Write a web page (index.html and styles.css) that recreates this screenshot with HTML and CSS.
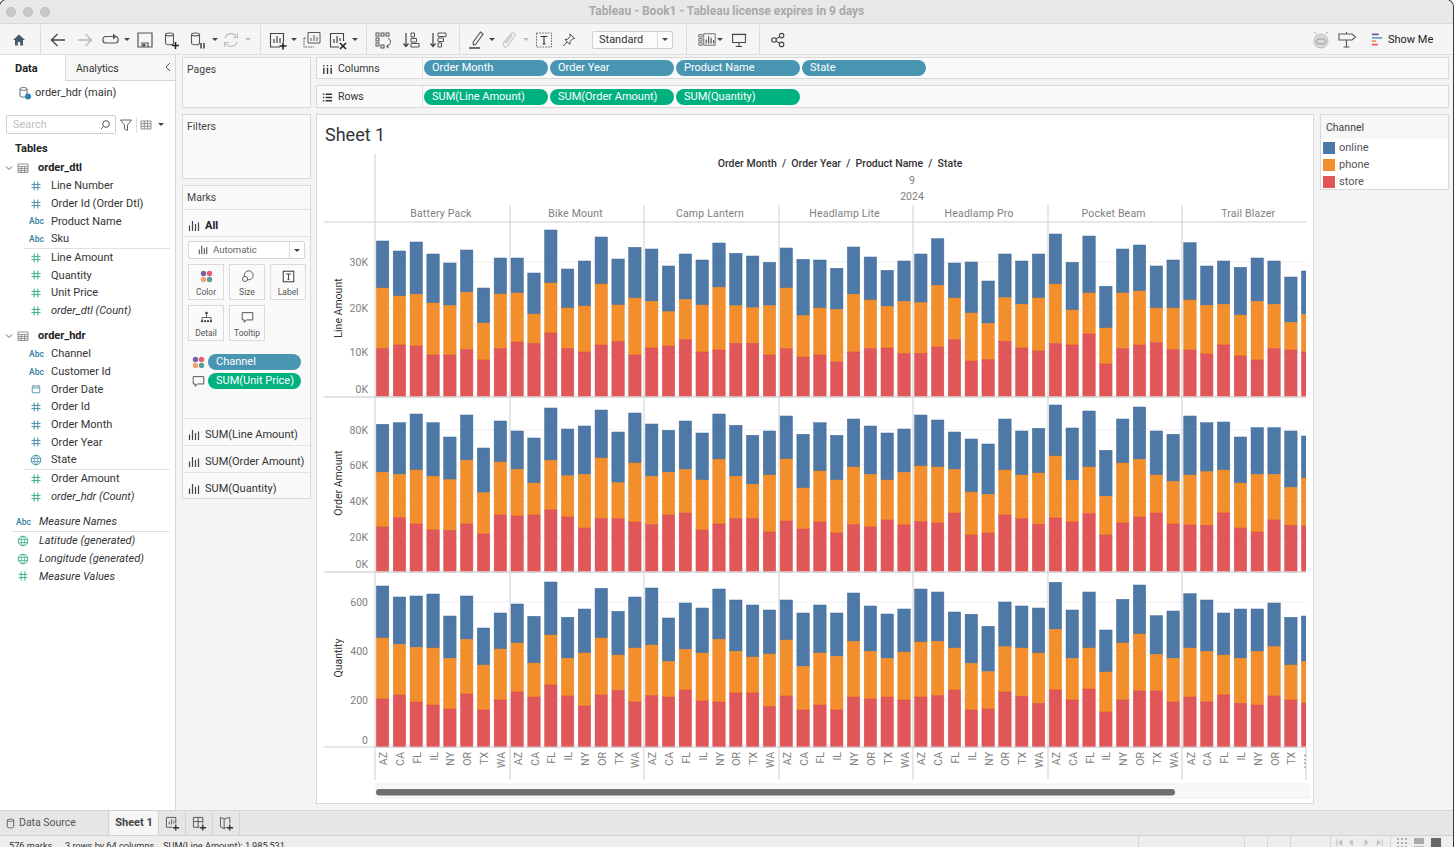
FILE: index.html
```html
<!DOCTYPE html>
<html lang="en">
<head>
<meta charset="utf-8">
<title>Tableau - Book1</title>
<link rel="stylesheet" href="styles.css">
</head>
<body>
<svg class="defs" width="0" height="0" aria-hidden="true">
  <symbol id="hash" viewBox="0 0 10 10"><path d="M3.2 0.5V9.5M6.8 0.5V9.5M0.5 3.4H9.5M0.5 6.6H9.5" fill="none" stroke="currentColor" stroke-width="1"/></symbol>
  <symbol id="globe" viewBox="0 0 12 12"><circle cx="6" cy="6" r="4.8" fill="none" stroke="currentColor"/><path d="M1.2 4.4H10.8M1.2 7.6H10.8M6 1.2C3.6 3.8 3.6 8.2 6 10.8M6 1.2C8.4 3.8 8.4 8.2 6 10.8" fill="none" stroke="currentColor" stroke-width=".8"/></symbol>
  <symbol id="cal" viewBox="0 0 12 12"><path d="M1.5 2.5H10.5V10.5H1.5ZM1.5 4.8H10.5M3.5 1V3M8.5 1V3" fill="none" stroke="currentColor"/></symbol>
  <symbol id="bars" viewBox="0 0 12 12"><path d="M1.5 5.5V11M4.5 1V11M7.5 4V11M10.5 2.5V11" fill="none" stroke="currentColor" stroke-width="1.2"/></symbol>
  <symbol id="tbl" viewBox="0 0 12 12"><path d="M1 2H11V10.5H1ZM1 4.6H11M1 6.6H11M1 8.6H11M4.3 4.6V10.5M7.6 4.6V10.5" fill="none" stroke="currentColor" stroke-width=".8"/></symbol>
  <symbol id="chev" viewBox="0 0 8 8"><path d="M1 2.5L4 5.5L7 2.5" fill="none" stroke="currentColor"/></symbol>
  <symbol id="dsbase" viewBox="0 0 20 20"><path d="M3.5 4.5C3.5 2.5 11.5 2.5 11.5 4.5V13C11.5 14 9.5 14.8 7.5 14.8C5.5 14.8 3.5 14 3.5 13ZM3.5 4.5C3.5 6.3 11.5 6.3 11.5 4.5" fill="none" stroke="currentColor" stroke-width="1.1"/></symbol>
  <symbol id="chip" viewBox="0 0 16 16"><circle cx="4.3" cy="4.3" r="3.3" fill="#7b5fa0"/><circle cx="11.7" cy="4.3" r="3.3" fill="#e4606d"/><circle cx="4.3" cy="11.7" r="3.3" fill="#f0a36b"/><circle cx="11.7" cy="11.7" r="3.3" fill="#5d9aa0"/></symbol>
  <symbol id="bubble" viewBox="0 0 16 16"><path d="M1.5 2H14.5V11H6.5L4 14V11H1.5Z" fill="none" stroke="#444" stroke-width="1.1"/></symbol>
</svg>

<div class="window">
  <header class="titlebar">
    <div class="lights"><i></i><i></i><i></i></div>
    <div class="wintitle">Tableau - Book1 - Tableau license expires in 9 days</div>
  </header>

  <nav class="toolbar">
    <svg class="ic s16" viewBox="0 0 20 20"><path d="M10 3L2.5 10H5V17H8.5V12.5H11.5V17H15V10H17.5Z" fill="#47596e"/></svg>
    <i class="tdiv"></i>
    <svg class="ic" viewBox="0 0 20 20"><path d="M17 10H4M9.5 4L3.5 10L9.5 16" fill="none" stroke="#444" stroke-width="1.3"/></svg>
    <svg class="ic" viewBox="0 0 20 20"><path d="M3 10H16M10.5 4L16.5 10L10.5 16" fill="none" stroke="#b9b9b9" stroke-width="1.3"/></svg>
    <svg class="ic" viewBox="0 0 20 20"><path d="M13 6.5H4.5C1 6.5 1 13 4.5 13H14.5C18 13 18 6.5 14.5 6.5" fill="none" stroke="#555" stroke-width="1.2"/><path d="M12 3.5L15.5 6.5L12 9.5Z" fill="#555"/></svg>
    <span class="caret"></span>
    <svg class="ic" viewBox="0 0 20 20"><path d="M3 3H17V17H3ZM7 17V13H13V17" fill="none" stroke="#555" stroke-width="1.2"/><path d="M8 14H10.5V16.5H8Z" fill="#555"/></svg>
    <svg class="ic" viewBox="0 0 20 20"><use href="#dsbase" color="#555"/><path d="M13.5 12V19M10 15.5H17" stroke="#222" stroke-width="1.6"/></svg>
    <svg class="ic" viewBox="0 0 20 20"><use href="#dsbase" color="#555"/><path d="M13 13V18.5M16 13V18.5" stroke="#333" stroke-width="1.4"/></svg>
    <span class="caret"></span>
    <svg class="ic" viewBox="0 0 20 20"><path d="M4 8A6.5 6.5 0 0 1 15.5 6.5M16 12A6.5 6.5 0 0 1 4.5 13.5" fill="none" stroke="#bdbdbd" stroke-width="1.3"/><path d="M16.5 3V7.5H12M3.5 17V12.5H8" fill="none" stroke="#bdbdbd" stroke-width="1.1"/></svg>
    <span class="caret off"></span>
    <i class="tdiv"></i>
    <svg class="ic" viewBox="0 0 20 20"><path d="M12 17H2.5V3.5H15.5V12" fill="none" stroke="#444" stroke-width="1.1"/><path d="M6 13V9M9 13V6M12 13V8" stroke="#444" stroke-width="1.2"/><path d="M15 12.5V19.5M11.5 16H18.5" stroke="#222" stroke-width="1.6"/></svg>
    <span class="caret"></span>
    <svg class="ic" viewBox="0 0 20 20"><path d="M6 2.5H18V13H6Z" fill="none" stroke="#555"/><path d="M9 11V8M12 11V5M15 11V7" stroke="#555"/><path d="M2 8H4.5M2 8V17H12" fill="none" stroke="#555" stroke-dasharray="1.6 1"/></svg>
    <svg class="ic" viewBox="0 0 20 20"><path d="M11 17H2.5V3.5H15.5V11" fill="none" stroke="#444" stroke-width="1.1"/><path d="M6 13V9M9 13V6M12 11V8" stroke="#444" stroke-width="1.2"/><path d="M12 13L18 19M18 13L12 19" stroke="#222" stroke-width="1.6"/></svg>
    <span class="caret"></span>
    <i class="tdiv"></i>
    <svg class="ic" viewBox="0 0 20 20"><g fill="none" stroke="#555"><rect x="2" y="3" width="3" height="3"/><rect x="7" y="3" width="3" height="3"/><rect x="12" y="3" width="3" height="3"/><rect x="2" y="8" width="3" height="3"/><rect x="2" y="13" width="3" height="3"/><rect x="7" y="15" width="3" height="3"/><path d="M14 8C18 10 17 15 13 16.5M15 18L12.5 16.5L14.5 14.5"/></g></svg>
    <svg class="ic" viewBox="0 0 20 20"><path d="M5 3V16M2.5 13.5L5 16.5L7.5 13.5" fill="none" stroke="#444" stroke-width="1.2"/><path d="M10 3H13.5V7H10ZM10 8.5H15.5V12H10ZM10 13.5H18V17H10Z" fill="none" stroke="#555"/></svg>
    <svg class="ic" viewBox="0 0 20 20"><path d="M5 3V16M2.5 13.5L5 16.5L7.5 13.5" fill="none" stroke="#444" stroke-width="1.2"/><path d="M10 3H18V6.5H10ZM10 8H15.5V11.5H10ZM10 13H13.5V17H10Z" fill="none" stroke="#555"/></svg>
    <i class="tdiv"></i>
    <svg class="ic" viewBox="0 0 20 20"><path d="M13.5 2L16 4L9 14L6.5 15L6 12.5Z" fill="none" stroke="#555" stroke-width="1.1"/><path d="M2 18H13" stroke="#333" stroke-width="1.4"/></svg>
    <span class="caret"></span>
    <svg class="ic" viewBox="0 0 20 20"><path d="M6 13L12 4C14 1.5 17.5 4 15.5 6.5L8.5 16C6.5 18.5 3 16 4.5 13L10.5 5.5C11.5 4.5 13 5.5 12.5 6.5L7.5 13.5" fill="none" stroke="#c4c4c4" stroke-width="1.1"/></svg>
    <span class="caret off"></span>
    <svg class="ic" viewBox="0 0 20 20"><rect x="2.5" y="3" width="15" height="14" fill="none" stroke="#666" stroke-dasharray="1.6 1.2"/><path d="M6.5 6.5H13.5M10 6.5V14M8.5 14H11.5" fill="none" stroke="#333" stroke-width="1.1"/></svg>
    <svg class="ic s16" viewBox="0 0 20 20"><path d="M11 2.5L17 8L14.5 8.5L11.5 12L11 15.5L5 9.5L8.5 9L11.5 5.5ZM7.5 12.5L3 17.5" fill="none" stroke="#444" stroke-width="1.2"/></svg>
    <div class="select"><span class="lbl">Standard</span><b><span class="caret"></span></b></div>
    <i class="tdiv"></i>
    <svg class="ic wide" viewBox="0 0 22 18"><path d="M1 3H5V6H1ZM1 8H5V11H1ZM1 13H5V16H1Z" fill="none" stroke="#555"/><path d="M7 2H21V16H7Z" fill="none" stroke="#555"/><path d="M10 14V9M13 14V5M16 14V7M19 14V10" stroke="#444" stroke-width="1.3"/></svg>
    <span class="caret"></span>
    <svg class="ic s16" viewBox="0 0 20 20"><path d="M2 3H18V13H2ZM10 13V18M6 18H14" fill="none" stroke="#444" stroke-width="1.3"/><path d="M1 3H19" stroke="#444" stroke-width="1.6"/></svg>
    <i class="tdiv"></i>
    <svg class="ic s16" viewBox="0 0 20 20"><g fill="none" stroke="#444" stroke-width="1.4"><circle cx="5" cy="10" r="2.8"/><circle cx="14.5" cy="4.5" r="2.8"/><circle cx="14.5" cy="15.5" r="2.8"/><path d="M7.3 8.7L12.2 5.8M7.3 11.3L12.2 14.2"/></g></svg>
    <span></span>
    <svg class="ic" viewBox="0 0 20 20"><circle cx="10" cy="11" r="7" fill="#d8d8d8" stroke="#bdbdbd"/><rect x="5.5" y="9" width="9" height="5" rx="2.5" fill="none" stroke="#999"/><path d="M5 4L3 1.5M15 4L17 1.5" stroke="#aaa"/></svg>
    <svg class="ic" viewBox="0 0 20 20"><path d="M2 4H15L18.5 7L15 10H2ZM9.5 10V17M6.5 17H12.5M9.5 2V4" fill="none" stroke="#555" stroke-width="1.1"/></svg>
    <div class="showme">
      <svg class="sm" viewBox="0 0 14 15"><path d="M1 1.5H9" stroke="#6d5a9c" stroke-width="2"/><path d="M1 5.5H13" stroke="#6ba3cf" stroke-width="2"/><path d="M1 9.5H6" stroke="#ee9a55" stroke-width="2"/><path d="M1 13.5H8" stroke="#e8596a" stroke-width="2"/></svg>
      <span>Show Me</span>
    </div>
  </nav>

  <main class="main">
    <aside class="datapane">
      <div class="tabs">
        <div class="tab active">Data</div>
        <div class="tab"><span>Analytics</span><svg class="collapse" viewBox="0 0 8 12"><path d="M6 2L2 6L6 10" fill="none" stroke="#555"/></svg></div>
      </div>
      <div class="source">
        <svg class="srcicon" viewBox="0 0 14 14"><path d="M2 3C2 1 9 1 9 3V10C9 11.5 2 11.5 2 10ZM2 3C2 4.8 9 4.8 9 3" fill="none" stroke="#666"/><circle cx="10" cy="10.5" r="3" fill="#2c7fb8"/></svg>
        <span>order_hdr (main)</span>
      </div>
      <div class="searchrow">
        <div class="search"><span>Search</span><svg viewBox="0 0 12 12"><circle cx="7" cy="5" r="3.3" fill="none" stroke="#555"/><path d="M4.6 7.4L2 10" stroke="#555"/></svg></div>
        <svg class="filt" viewBox="0 0 14 14"><path d="M1.5 2H12.5L8.5 7V12.5L5.5 11V7Z" fill="none" stroke="#666"/></svg>
        <i class="vsep"></i>
        <svg class="gridic" viewBox="0 0 12 10"><path d="M1 1H11V9H1ZM1 3.6H11M1 6.3H11M4.3 1V9M7.6 1V9" fill="none" stroke="#777" stroke-width=".8"/></svg>
        <span class="caret"></span>
      </div>
      <div class="tree">
        <div class="tablesh">Tables</div>
        <div class="thead"><svg class="tchev"><use href="#chev"/></svg><svg class="ttbl"><use href="#tbl"/></svg><b>order_dtl</b></div>
        <div class="f"><svg class="h d"><use href="#hash"/></svg>Line Number</div>
        <div class="f"><svg class="h d"><use href="#hash"/></svg>Order Id (Order Dtl)</div>
        <div class="f"><em class="abc">Abc</em>Product Name</div>
        <div class="f"><em class="abc">Abc</em>Sku</div>
        <div class="sep"></div>
        <div class="f"><svg class="h m"><use href="#hash"/></svg>Line Amount</div>
        <div class="f"><svg class="h m"><use href="#hash"/></svg>Quantity</div>
        <div class="f"><svg class="h m"><use href="#hash"/></svg>Unit Price</div>
        <div class="f it"><svg class="h m"><use href="#hash"/></svg>order_dtl (Count)</div>
        <div class="thead second"><svg class="tchev"><use href="#chev"/></svg><svg class="ttbl"><use href="#tbl"/></svg><b>order_hdr</b></div>
        <div class="f"><em class="abc">Abc</em>Channel</div>
        <div class="f"><em class="abc">Abc</em>Customer Id</div>
        <div class="f"><svg class="h d"><use href="#cal"/></svg>Order Date</div>
        <div class="f"><svg class="h d"><use href="#hash"/></svg>Order Id</div>
        <div class="f"><svg class="h d"><use href="#hash"/></svg>Order Month</div>
        <div class="f"><svg class="h d"><use href="#hash"/></svg>Order Year</div>
        <div class="f"><svg class="h d g"><use href="#globe"/></svg>State</div>
        <div class="sep"></div>
        <div class="f"><svg class="h m"><use href="#hash"/></svg>Order Amount</div>
        <div class="f it"><svg class="h m"><use href="#hash"/></svg>order_hdr (Count)</div>
        <div class="f it top names"><em class="abc">Abc</em>Measure Names</div>
        <div class="sep top"></div>
        <div class="f it top"><svg class="h m g"><use href="#globe"/></svg>Latitude (generated)</div>
        <div class="f it top"><svg class="h m g"><use href="#globe"/></svg>Longitude (generated)</div>
        <div class="f it top"><svg class="h m"><use href="#hash"/></svg>Measure Values</div>
      </div>
    </aside>

    <section class="cards">
      <div class="card pages"><div class="cardh">Pages</div></div>
      <div class="card filters"><div class="cardh">Filters</div></div>
      <div class="card marks">
        <div class="marksh">Marks</div>
        <div class="mrow all"><svg class="mb"><use href="#bars"/></svg><b>All</b></div>
        <div class="auto"><svg class="mb"><use href="#bars"/></svg><span class="lbl">Automatic</span><b><span class="caret"></span></b></div>
        <div class="mbtns">
          <div class="mbtn"><svg viewBox="0 0 16 16"><use href="#chip"/></svg><span>Color</span></div>
          <div class="mbtn"><svg viewBox="0 0 16 16"><circle cx="9.5" cy="6.5" r="5.5" fill="none" stroke="#444"/><circle cx="5" cy="11" r="3.2" fill="#f8f8f8" stroke="#444"/></svg><span>Size</span></div>
          <div class="mbtn"><svg viewBox="0 0 16 16"><rect x="1.5" y="1.5" width="13" height="13" fill="none" stroke="#333" stroke-width="1.2"/><path d="M5 5H11M8 5V11.5M6.7 11.5H9.3" fill="none" stroke="#333" stroke-width="1.1"/></svg><span>Label</span></div>
          <div class="mbtn"><svg viewBox="0 0 16 16"><g fill="#444"><circle cx="8" cy="2.5" r="1.6"/><circle cx="2.5" cy="12.5" r="1.4"/><circle cx="6.2" cy="12.5" r="1.4"/><circle cx="9.8" cy="12.5" r="1.4"/><circle cx="13.5" cy="12.5" r="1.4"/></g><path d="M8 3V8M2.5 12V8H13.5V12" fill="none" stroke="#444"/></svg><span>Detail</span></div>
          <div class="mbtn"><svg viewBox="0 0 16 16"><use href="#bubble"/></svg><span>Tooltip</span></div>
        </div>
        <div class="mpills">
          <div class="mpill"><svg viewBox="0 0 16 16"><use href="#chip"/></svg><span class="pill dim">Channel</span></div>
          <div class="mpill"><svg viewBox="0 0 16 16"><use href="#bubble"/></svg><span class="pill mea">SUM(Unit Price)</span></div>
        </div>
        <div class="mrow mm"><svg class="mb"><use href="#bars"/></svg>SUM(Line Amount)</div>
        <div class="mrow mm"><svg class="mb"><use href="#bars"/></svg>SUM(Order Amount)</div>
        <div class="mrow mm"><svg class="mb"><use href="#bars"/></svg>SUM(Quantity)</div>
      </div>
    </section>

    <section class="work">
      <div class="shelf cols">
        <div class="shelfl"><svg viewBox="0 0 12 12"><path d="M2 1V2.5M6 1V2.5M10 1V2.5M2 4V11M6 4V11M10 4V11" stroke="#333" stroke-width="1.5"/></svg><span>Columns</span></div>
        <div class="pills"><span class="pill dim">Order Month</span><span class="pill dim">Order Year</span><span class="pill dim">Product Name</span><span class="pill dim">State</span></div>
      </div>
      <div class="shelf rows">
        <div class="shelfl"><svg viewBox="0 0 12 12"><path d="M1 2.5H2.5M4 2.5H11M1 6H2.5M4 6H11M1 9.5H2.5M4 9.5H11" stroke="#333" stroke-width="1.5"/></svg><span>Rows</span></div>
        <div class="pills"><span class="pill mea">SUM(Line Amount)</span><span class="pill mea">SUM(Order Amount)</span><span class="pill mea">SUM(Quantity)</span></div>
      </div>
      <div class="vizrow">
        <div class="sheet">
          <h1>Sheet 1</h1>
          <svg id="chart" class="chart" viewBox="317 151 996 652"></svg>
        </div>
        <div class="legend">
          <div class="legh">Channel</div>
          <div class="li"><i class="sw online"></i>online</div>
          <div class="li"><i class="sw phone"></i>phone</div>
          <div class="li"><i class="sw store"></i>store</div>
        </div>
      </div>
    </section>
  </main>

  <footer class="sheets">
    <div class="stab ds"><svg viewBox="0 0 12 12"><path d="M2.5 2.5C2.5 .8 9.5 .8 9.5 2.5V9.5C9.5 11.2 2.5 11.2 2.5 9.5ZM2.5 2.5C2.5 4 9.5 4 9.5 2.5" fill="none" stroke="#555"/></svg><span>Data Source</span></div>
    <div class="stab cur">Sheet 1</div>
    <div class="stab add"><svg viewBox="0 0 16 16"><path d="M8 12H1.5V1.5H11.5V8" fill="none" stroke="#555"/><path d="M4.5 9V6M7 9V3.5M9.5 8V5" stroke="#555"/><path d="M11.5 9V15.5M8.5 12.5H15" stroke="#333" stroke-width="1.4"/></svg></div>
    <div class="stab add"><svg viewBox="0 0 16 16"><path d="M8 12H1.5V1.5H11.5V8M1.5 6H11.5M6.5 1.5V12" fill="none" stroke="#555"/><path d="M11.5 9V15.5M8.5 12.5H15" stroke="#333" stroke-width="1.4"/></svg></div>
    <div class="stab add"><svg viewBox="0 0 16 16"><path d="M8 12L5.5 13.5L1.5 11.5V1.5L5.5 3L11.5 1.5V8M5.5 3V13.5" fill="none" stroke="#555"/><path d="M11.5 9V15.5M8.5 12.5H15" stroke="#333" stroke-width="1.4"/></svg></div>
  </footer>
  <footer class="status">
    <span class="st1">576 marks</span><span class="st2">3 rows by 64 columns</span><span class="st3">SUM(Line Amount): 1,985,531</span>
    <div class="stright">
      <i class="ssep s1"></i><i class="ssep s2"></i><i class="ssep s3"></i><i class="ssep s4"></i><i class="ssep s5"></i><i class="ssep s6"></i>
      <svg class="navs" viewBox="0 0 54 10"><path d="M1 1V9" stroke="#bbb"/><path d="M7 1L2.5 5L7 9ZM19 1L14.5 5L19 9ZM32 1L36.5 5L32 9ZM46 1L50.5 5L46 9Z" fill="#c2c2c2"/><path d="M52 1V9" stroke="#bbb"/></svg>
      <div class="views">
        <svg viewBox="0 0 12 10"><path d="M1 1H3M5 1H7M9 1H11M1 5H3M5 5H7M9 5H11M1 9H3M5 9H7M9 9H11" stroke="#999" stroke-width="1.6"/></svg>
        <svg viewBox="0 0 12 10"><rect x="1" y="0" width="10" height="6" fill="#aaa"/><path d="M1 9H11" stroke="#bbb" stroke-width="2"/></svg>
        <svg viewBox="0 0 12 10"><rect x="1" y="0" width="10" height="10" fill="#666"/></svg>
      </div>
    </div>
  </footer>
</div>
<script src="chart.js"></script>
</body>
</html>
```
FILE: styles.css
```css
* { box-sizing: border-box; }
html, body { margin: 0; height: 100%; overflow: hidden; background: #fff; }
body { font: 11px/1.2 Roboto, "Liberation Sans", sans-serif; color: #333; }
.defs { position: absolute; }

.window { width: 1453px; height: 847px; display: flex; flex-direction: column; background: #f4f4f4; border-radius: 7px 7px 0 0; overflow: hidden; box-shadow: 0 0 0 1px #3a3a3a; }

.titlebar { height: 24px; flex: none; background: #e8e8e8; border-bottom: 1px solid #d9d9d9; display: flex; align-items: center; position: relative; }
.lights { display: flex; gap: 7px; padding-left: 6px; }
.lights i { width: 10px; height: 10px; border-radius: 50%; background: #c8c8c8; border: 1px solid #bcbcbc; }
.wintitle { position: absolute; left: 0; right: 0; text-align: center; font-weight: 700; font-size: 12px; color: #a9a9a9; }

.toolbar { height: 31px; flex: none; display: grid; align-items: center; justify-items: center; padding: 1px 18px 0 6px; background: #f5f5f5; border-bottom: 1px solid #dedede;
  grid-template-columns: 26px 17px 18px 36px 16px 16px 20px 34px 18px 16px 16px 18px 6px 30px 2px 34px 18px 16px 6px 30px 24px 30px 12px 24px 6px 28px 6px 30px 20px 94px 26px 16px 10px 28px 12px 26px 1fr 20px 32px 72px; }
.ic { width: 20px; height: 20px; display: block; }
.ic.s16 { width: 16px; height: 16px; }
.ic.wide { width: 18px; height: 15px; }
.tdiv { width: 1px; height: 29px; background: #dcdcdc; }
.caret { display: inline-block; width: 0; height: 0; border-left: 3px solid transparent; border-right: 3px solid transparent; border-top: 3.5px solid #444; }
.caret.off { border-top-color: #bdbdbd; }
.select { justify-self: end; width: 81px; height: 18px; display: flex; align-items: center; background: #fbfbfb; border: 1px solid #cfcfcf; border-radius: 2px; font-size: 11px; color: #333; }
.select .lbl { flex: 1; padding-left: 6px; }
.select b { width: 15px; height: 100%; border-left: 1px solid #d9d9d9; display: flex; align-items: center; justify-content: center; }
.showme { width: 72px; display: flex; align-items: center; gap: 5px; padding-left: 8px; color: #222; white-space: nowrap; }
.sm { width: 12px; height: 13px; }

.main { height: 755px; flex: none; display: flex; align-items: flex-start; background: #f4f4f4; }

.datapane { width: 176px; height: 755px; flex: none; background: #fff; border-right: 1px solid #d6d6d6; }
.tabs { display: flex; height: 26px; }
.tab { display: flex; align-items: center; padding: 2px 0 0 15px; }
.tab.active { width: 65px; font-weight: 700; color: #222; }
.tab:not(.active) { flex: 1; position: relative; padding: 3px 0 0 10px; background: #f6f6f6; border-left: 1px solid #d6d6d6; border-bottom: 1px solid #d6d6d6; font-size: 10.5px; }
.collapse { position: absolute; right: 3px; top: 6px; width: 8px; height: 12px; }
.source { height: 23px; display: flex; align-items: center; gap: 3px; padding: 1px 0 0 18px; }
.srcicon { width: 14px; height: 14px; }
.searchrow { height: 21px; margin-top: 10px; padding-left: 6px; display: flex; align-items: center; }
.search { width: 110px; height: 19px; border: 1px solid #cfcfcf; border-radius: 2px; display: flex; align-items: center; justify-content: space-between; padding: 0 4px 0 6px; color: #c0c0c0; }
.search svg { width: 12px; height: 12px; }
.filt { width: 14px; height: 14px; margin-left: 3px; }
.vsep { width: 1px; height: 16px; background: #ddd; margin: 0 3px; }
.gridic { width: 12px; height: 10px; margin-right: 5px; }
.searchrow .caret { margin-left: 1px; }

.tree { padding-top: 5px; }
.tablesh { height: 19px; line-height: 18px; padding-left: 15px; font-weight: 700; color: #222; }
.thead { height: 18px; display: flex; align-items: center; }
.thead.second { margin-top: 7.5px; }
.thead b { font-weight: 700; color: #222; }
.tchev { width: 8px; height: 8px; margin-left: 5px; color: #666; }
.ttbl { width: 12px; height: 12px; margin: 0 9px 0 4px; color: #777; }
.f { height: 17.7px; display: flex; align-items: center; padding-left: 51px; position: relative; color: #333; white-space: nowrap; }
.f.it { font-style: italic; }
.f.top { padding-left: 39px; }
.f.names { margin-top: 8px; }
.f .h { position: absolute; left: 31px; top: 4px; width: 10px; height: 10px; }
.f.top .h { left: 18px; }
.h.d { color: #4a8fa8; }
.h.m { color: #3fae8e; }
.h.g { width: 12px; height: 12px; top: 3px; left: 30px; }
.f.top .h.g { left: 17px; }
.abc { position: absolute; left: 29px; top: 4px; font-style: normal; font-weight: 500; font-size: 8.5px; color: #2f7d9f; }
.f.top .abc { left: 16px; }
.sep { height: 1px; margin: 0 5px 0 24px; background: #e0e0e0; }
.sep.top { margin-left: 12px; }

.cards { width: 129px; flex: none; margin-left: 6px; padding-top: 2px; display: flex; flex-direction: column; gap: 6px; }
.card { background: #fafafa; border: 1px solid #d9d9d9; }
.pages { height: 51px; }
.filters { height: 65px; }
.cardh { padding: 6px 4px; color: #444; font-size: 10.5px; }
.marks { height: 314px; display: flex; flex-direction: column; background: #f9f9f9; }
.marksh { height: 24px; padding-left: 4px; line-height: 23px; font-size: 10.5px; color: #444; border-bottom: 1px solid #e3e3e3; }
.mrow { height: 27px; flex: none; display: flex; align-items: center; gap: 5px; padding-left: 5px; border-bottom: 1px solid #e3e3e3; }
.mrow b { color: #222; }
.mb { width: 12px; height: 12px; color: #444; }
.all { background: #fafafa; padding-top: 5px; }
.auto { margin: 4px 5px 0; height: 18px; flex: none; display: flex; align-items: center; gap: 5px; padding-left: 9px; background: #fff; border: 1px solid #d6d6d6; border-radius: 2px; font-size: 9.5px; color: #666; }
.auto .mb { width: 10px; height: 10px; }
.auto .lbl { flex: 1; }
.auto b { width: 15px; height: 100%; border-left: 1px solid #ddd; display: flex; align-items: center; justify-content: center; }
.mbtns { margin: 5px 5px 0; display: grid; grid-template-columns: repeat(3, 36px); column-gap: 5px; row-gap: 5px; }
.mbtn { height: 36px; display: flex; flex-direction: column; align-items: center; justify-content: flex-end; gap: 2px; padding-bottom: 2px; background: #fafafa; border: 1px solid #dadada; font-size: 8.5px; color: #555; }
.mbtn svg { width: 13px; height: 13px; margin-bottom: 2px; }
.mpills { margin: 13px 9px 0 9px; display: flex; flex-direction: column; gap: 3px; height: 64px; flex: none; }
.mpill { display: flex; align-items: center; gap: 3px; }
.mpill svg { width: 13px; height: 13px; }
.mpill .pill { width: 93px; }
.mm { border-bottom: 0; border-top: 1px solid #e3e3e3; color: #333; padding-top: 6px; }

.work { width: 1133px; flex: none; margin-left: 5px; padding-top: 2px; }
.shelf { display: flex; background: #fafafa; border: 1px solid #d9d9d9; height: 22px; }
.shelf.rows { margin-top: 6px; height: 23px; }
.shelfl { width: 106px; display: flex; align-items: center; gap: 5px; padding: 2px 0 0 5px; border-right: 1px solid #e3e3e3; color: #333; font-size: 10.5px; }
.shelfl svg { width: 11px; height: 11px; }
.pills { display: flex; align-items: center; gap: 2px; padding-left: 1px; }
.pill { display: block; width: 124px; height: 16px; line-height: 16px; padding-left: 8px; border-radius: 8px; color: #fff; white-space: nowrap; }
.pill.dim { background: #4996b2; }
.pill.mea { background: #00b180; }

.vizrow { display: flex; gap: 6px; margin-top: 6px; align-items: flex-start; }
.sheet { width: 998px; height: 690px; flex: none; background: #fff; border: 1px solid #d9d9d9; }
.sheet h1 { margin: 0; height: 36px; line-height: 40px; padding-left: 8px; font-weight: 400; font-size: 18px; color: #333; }
.chart { display: block; width: 996px; height: 652px; }
.legend { width: 129px; height: 76px; background: #fff; border: 1px solid #d9d9d9; }
.legh { height: 24px; line-height: 25px; padding-left: 5px; background: #f6f6f6; color: #444; font-size: 10.5px; }
.li { height: 17px; display: flex; align-items: center; gap: 4px; padding-left: 2px; color: #555; }
.sw { width: 12px; height: 12px; }
.online { background: #4e79a7; }
.phone { background: #f28e2b; }
.store { background: #e15759; }

.chart text { font-family: Roboto, "Liberation Sans", sans-serif; font-size: 10.5px; fill: #808080; }
.chart .hdr { fill: #333; font-weight: 500; }
.chart .ttl { fill: #333; }
.chart .pname { letter-spacing: .2px; }
.chart .grid { stroke: #efefef; stroke-width: 1; }
.chart .rule { stroke: #cfcfcf; stroke-width: 1; }
.chart .rowrule { stroke: #d9d9d9; stroke-width: 1.5; }
.chart .b0 { fill: #4e79a7; stroke: #3f6a9b; stroke-width: .5; }
.chart .b1 { fill: #f28e2b; stroke: #ea8a2a; stroke-width: .5; }
.chart .b2 { fill: #e15759; stroke: #d84e52; stroke-width: .5; }
.chart .track { fill: #f8f8f8; }
.chart .thumb { fill: #6f6f6f; }

.sheets { height: 26px; flex: none; display: flex; background: #e6e6e6; border-top: 1px solid #d3d3d3; border-bottom: 1px solid #d3d3d3; }
.stab { display: flex; align-items: center; justify-content: center; border-right: 1px solid #d3d3d3; color: #555; }
.stab.ds { width: 109px; gap: 3px; justify-content: flex-start; padding-left: 5px; font-size: 10.5px; }
.stab.ds svg { width: 11px; height: 11px; }
.stab.cur { width: 50px; background: #f6f6f6; font-weight: 700; color: #444; border-left: 1px solid #eee; }
.stab.add { width: 27px; }
.stab.add svg { width: 15px; height: 15px; }

.status { flex: 1; position: relative; background: #eeeeee; font-size: 9.2px; color: #333; white-space: nowrap; }
.status > span { position: absolute; top: 4px; }
.st1 { left: 9px; } .st2 { left: 65px; } .st3 { left: 163px; }
.stright { position: absolute; inset: 0; }
.ssep { position: absolute; top: 0; bottom: 0; width: 1px; background: #d6d6d6; }
.s1 { left: 1138px; } .s2 { left: 1244px; } .s3 { left: 1267px; } .s4 { left: 1290px; } .s5 { left: 1330px; } .s6 { left: 1390px; }
.navs { position: absolute; left: 1336px; top: 2px; width: 48px; height: 9px; }
.views { position: absolute; left: 1396px; top: 2px; display: flex; gap: 5px; }
.views svg { width: 12px; height: 10px; }
```
FILE: chart.js
```js
// Stacked bars: for each bar, y of [blue top, orange top, red top] read per panel (8 states, 7 products).
var NS = 'http://www.w3.org/2000/svg';
var svg = document.getElementById('chart');
var rowsData = [
  { y0: 225, base: 397, title: 'Line Amount', tY: 308, ticks: [['30K',262],['20K',307.5],['10K',352.3],['0K',397,389]], d:
  [48,189,371,78,213,360,51,208,363,87,234,390,114,242,390,75,202,374,189,294,405,99,207,371,
   99,204,351,144,267,355,15,174,324,132,249,371,108,243,381,36,177,360,102,240,349,67,219,390,
   72,229,369,123,260,363,87,223,344,105,240,381,54,187,375,85,242,355,93,248,355,112,242,390,
   69,189,371,103,272,396,105,249,390,130,253,411,66,208,381,96,225,371,136,244,369,108,229,386,
   87,233,385,41,181,366,114,219,344,111,264,408,168,295,404,87,218,349,108,238,369,87,219,378,
   27,177,356,112,255,360,33,204,327,184,309,417,72,204,371,60,198,360,123,249,353,105,249,374,
   53,225,375,123,241,387,108,238,360,127,270,393,99,229,405,108,238,371,156,292,375,138,268,381] },
  { y0: 397, base: 572, title: 'Order Amount', tY: 483, ticks: [['80K',429.7],['60K',465],['40K',501],['20K',537],['0K',572,564]], d:
  [82,226,390,77,232,362,51,219,381,77,238,399,120,248,400,54,190,381,153,287,411,72,195,354,
   102,217,357,123,258,354,33,190,339,96,236,360,87,232,393,39,183,365,105,257,365,48,198,375,
   81,238,383,100,226,354,72,217,348,108,249,399,51,187,381,85,238,365,115,262,365,102,234,405,
   57,186,372,112,273,396,77,222,375,115,249,408,66,210,383,87,232,390,108,249,369,96,226,384,
   54,207,374,69,210,378,105,217,348,126,285,414,141,292,408,66,219,354,102,234,365,94,228,382,
   24,177,363,93,250,375,42,210,350,160,298,414,66,198,378,30,187,360,102,234,348,112,253,381,
   57,234,384,77,224,385,75,219,348,120,258,393,92,232,405,92,232,369,102,271,385,117,243,387] },
  { y0: 575, base: 747, title: 'Quantity', tY: 658, ticks: [['600',602],['400',651],['200',700],['0',747,740]], d:
  [33,189,372,66,208,360,63,217,381,57,219,390,123,250,402,63,193,357,159,270,405,114,222,375,
   87,204,351,124,264,366,21,180,330,127,250,363,102,234,393,40,189,360,109,240,346,66,219,381,
   39,210,362,129,259,366,84,223,345,99,234,378,42,193,381,75,229,354,90,246,354,105,237,394,
   75,195,363,114,274,405,90,234,390,114,244,405,54,199,366,93,229,372,117,250,366,102,231,375,
   42,201,366,51,199,362,111,219,345,118,265,405,154,290,402,81,215,351,93,219,364,99,234,385,
   22,163,345,105,250,375,51,219,342,165,291,411,73,204,375,30,177,348,122,238,348,108,250,381,
   56,219,366,75,229,381,114,240,360,102,250,385,102,229,390,84,215,363,127,270,375,123,259,384] }
];
var products = ['Battery Pack','Bike Mount','Camp Lantern','Headlamp Lite','Headlamp Pro','Pocket Beam','Trail Blazer'];
var states = ['AZ','CA','FL','IL','NY','OR','TX','WA'];
var X0 = 376.4, PITCH = 16.82, W = 12.4, PANEL = 134.55, PX = 375, RIGHT = 1306;

function el(name, attrs, text, parent) {
  var e = document.createElementNS(NS, name);
  for (var k in attrs) e.setAttribute(k, attrs[k]);
  if (text != null) e.textContent = text;
  (parent || svg).appendChild(e);
  return e;
}

var clip = el('clipPath', { id: 'paneclip' }, null, el('defs', {}));
el('rect', { x: 317, y: 151, width: RIGHT - 317, height: 652 }, null, clip);
var gridLayer = el('g', {});
var g = el('g', { 'clip-path': 'url(#paneclip)' });

// headers
el('text', { x: 840, y: 167, 'text-anchor': 'middle', class: 'hdr' }, 'Order Month\u00a0 /\u00a0 Order Year\u00a0 /\u00a0 Product Name\u00a0 /\u00a0 State');
el('text', { x: 912, y: 184, 'text-anchor': 'middle' }, '9');
el('text', { x: 912, y: 200, 'text-anchor': 'middle' }, '2024');
products.forEach(function (p, i) {
  el('text', { x: PX + PANEL * (i + 0.49), y: 217, 'text-anchor': 'middle', class: 'pname' }, p);
});

rowsData.forEach(function (r) {
  r.ticks.forEach(function (t) {
    el('line', { x1: PX, x2: RIGHT, y1: t[1], y2: t[1], class: 'grid' }, null, gridLayer);
    el('text', { x: 368, y: (t[2] || t[1]) + 4, 'text-anchor': 'end' }, t[0]);
  });
  el('text', { transform: 'translate(342 ' + r.tY + ') rotate(-90)', 'text-anchor': 'middle', class: 'ttl' }, r.title);
  for (var i = 0; i < 56; i++) {
    var x = X0 + PITCH * i;
    var tops = [r.d[i * 3], r.d[i * 3 + 1], r.d[i * 3 + 2]].map(function (v) { return r.y0 + v / 3; });
    var ends = [tops[1], tops[2], r.base];
    for (var c = 0; c < 3; c++) {
      el('rect', { x: x.toFixed(2), y: tops[c].toFixed(1), width: W, height: (ends[c] - tops[c]).toFixed(1), class: 'b' + c }, null, g);
    }
  }
});

// x axis labels
for (var i = 0; i < 56; i++) {
  var cx = X0 + PITCH * i + W / 2 + 4.5;
  el('text', { transform: 'translate(' + cx.toFixed(1) + ' 752) rotate(-90)', 'text-anchor': 'end' }, states[i % 8], g);
}

// rules
[222, 397, 572, 747].forEach(function (y) {
  el('line', { x1: 324, x2: RIGHT, y1: y, y2: y, class: y === 222 || y === 747 ? 'rule' : 'rowrule' });
});
el('line', { x1: 375, x2: 375, y1: 154, y2: 780, class: 'rule' });
for (var p = 1; p <= 7; p++) {
  var lx = p === 7 ? RIGHT : PX + Math.round(PANEL * p);
  el('line', { x1: lx, x2: lx, y1: p === 7 ? 747 : 205, y2: 780, class: 'rule' });
}

// scrollbar
el('rect', { x: 375, y: 784, width: 935, height: 14, class: 'track' });
el('line', { x1: 375, x2: 1310, y1: 784, y2: 784, class: 'grid' });
el('line', { x1: 375, x2: 1310, y1: 798, y2: 798, class: 'grid' });
el('rect', { x: 376, y: 789, width: 799, height: 6.5, rx: 3.2, class: 'thumb' });
```
